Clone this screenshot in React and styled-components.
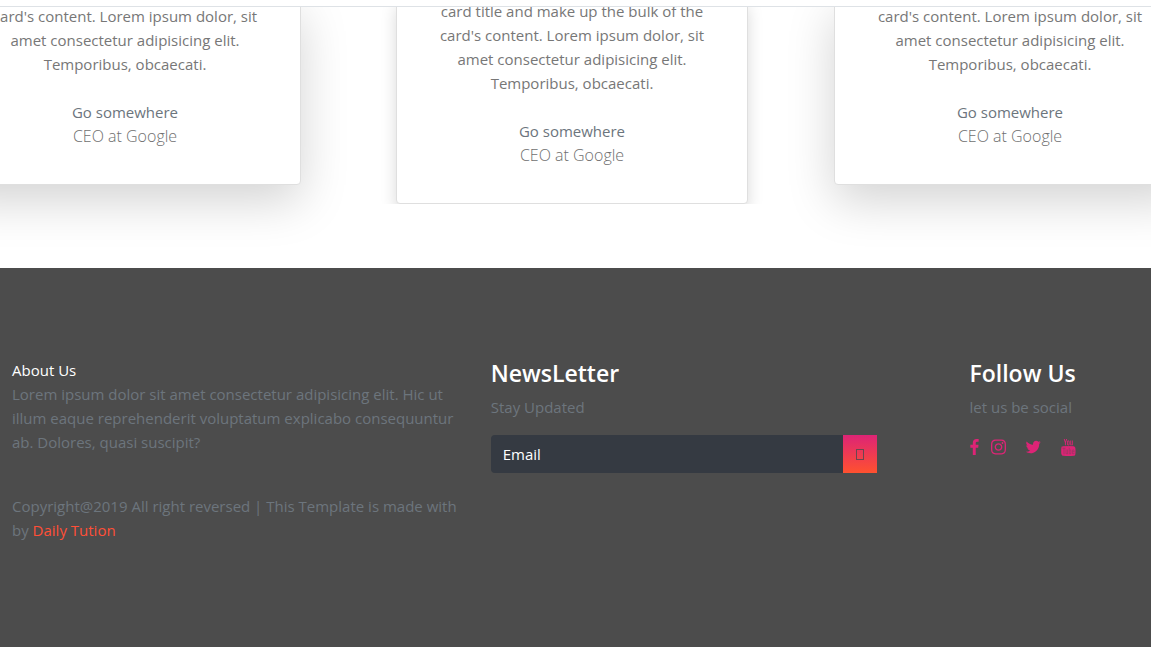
import React from "react";
import styled, { createGlobalStyle } from "styled-components";
import { TfiYoutube } from "react-icons/tfi";

const GlobalStyle = createGlobalStyle`
  *, *::before, *::after { box-sizing: border-box; }
  body {
    margin: 0;
    background: #fff;
    color: #212529;
    font-family: "Open Sans", "Noto Sans", sans-serif;
    font-size: 15px;
    line-height: 24px;
    overflow-x: hidden;
  }
  #root { min-height: 100vh; display: flex; flex-direction: column; }
  h4, h6, p { margin: 0; font-weight: 400; }
  a { text-decoration: none; }
`;

const TopBar = styled.header`
  position: relative;
  z-index: 2;
  height: 7px;
  background: #fff;
  border-bottom: 1px solid #dee2e6;
`;

const Stage = styled.main`
  display: flex;
  justify-content: center;
  height: 261px;
  padding: 0 16px 64px 0;
  overflow: hidden;
`;

const Slide = styled.div`
  display: flex;
  flex: none;
  ${(p) =>
    p.$active
      ? "overflow: hidden; padding: 0 16px; margin: 0 70px 0 79px;"
      : "margin-bottom: 19px;"}
`;

const Card = styled.article`
  display: flex;
  flex-direction: column;
  justify-content: flex-end;
  width: 352px;
  margin-top: -8px;
  padding: 0 40px 36px;
  text-align: center;
  color: #777;
  background: #fff;
  border: 1px solid #dfdfdf;
  border-radius: 4px;
  box-shadow: ${(p) =>
    p.$active
      ? "0 8px 16px rgba(0, 0, 0, 0.15)"
      : "0 16px 48px rgba(0, 0, 0, 0.175)"};
`;

const CardText = styled.p`
  margin-bottom: 24px;
  white-space: pre-line;
`;

const CardLink = styled.a`
  color: #6c757d;
`;

const Role = styled.p`
  font-size: 16px;
  font-weight: 300;
  color: #6f6f6f;
`;

const Footer = styled.footer`
  flex: 1;
  padding: 90px 2px 105px 0;
  background: #4c4c4c;
  color: #6c757d;
`;

const Columns = styled.div`
  display: grid;
  grid-template-columns: 5fr 5fr 2fr;
`;

const Column = styled.section`
  padding: 0 12px;
  min-width: 0;
`;

const SmallTitle = styled.h6`
  font-size: 15px;
  color: #fff;
`;

const Title = styled.h4`
  margin-bottom: 6px;
  font-size: 23px;
  line-height: 31px;
  font-weight: 600;
  color: #fff;
`;

const Text = styled.p`
  margin-bottom: ${(p) => p.$space || 0}px;
`;

const BrandLink = styled.a`
  color: #ff4f37;
`;

const Form = styled.form`
  display: flex;
  width: 85%;
  height: 38px;
`;

const EmailInput = styled.input`
  flex: 1;
  min-width: 0;
  padding: 0 12px;
  border: 0;
  border-radius: 4px 0 0 4px;
  background: #353a42;
  color: #fff;
  font: inherit;
  &::placeholder { color: #fff; opacity: 1; }
`;

const Submit = styled.button`
  display: flex;
  align-items: center;
  justify-content: center;
  width: 34px;
  padding: 0;
  border: 0;
  background: linear-gradient(#dd2476, #ff512f);
`;

const MissingGlyph = styled.span`
  width: 8px;
  height: 11px;
  border: 1px solid #6b4650;
`;

const Socials = styled.nav`
  display: flex;
  align-items: center;
  height: 24px;
  color: #dd2476;
`;

const SocialLink = styled.a`
  display: flex;
  color: inherit;
  margin-right: ${(p) => p.$space || 0}px;
`;

const lines = ["card's content. Lorem ipsum dolor, sit", "amet consectetur adipisicing elit.", "Temporibus, obcaecati."];

const slides = [
  { id: 1, active: false, text: lines.join("\n") },
  { id: 2, active: true, text: ["card title and make up the bulk of the", ...lines].join("\n") },
  { id: 3, active: false, text: lines.join("\n") },
];

const socials = [
  {
    name: "Facebook",
    space: 12,
    width: 9,
    box: "479 0 864 1664",
    path: "M1343 12v264h-157q-86 0-116 36t-30 108v189h293l-39 296h-254v759h-306v-759h-255v-296h255v-218q0-186 104-288.500t277-102.500q147 0 228 12z",
  },
  {
    name: "Instagram",
    space: 19,
    width: 15,
    box: "128 128 1536 1536",
    path: "M1152 896q0-106-75-181t-181-75-181 75-75 181 75 181 181 75 181-75 75-181zm138 0q0 164-115 279t-279 115-279-115-115-279 115-279 279-115 279 115 115 279zm108-410q0 38-27 65t-65 27-65-27-27-65 27-65 65-27 65 27 27 65zm-502-220q-7 0-76.500-.5t-105.500 0-96.500 3-103 10-71.500 18.500q-50 20-88 58t-58 88q-11 29-18.500 71.500t-10 103-3 96.500 0 105.500.5 76.500-.5 76.500 0 105.500 3 96.500 10 103 18.500 71.500q20 50 58 88t88 58q29 11 71.500 18.500t103 10 96.500 3 105.500 0 76.500-.5 76.500.5 105.500 0 96.500-3 103-10 71.500-18.500q50-20 88-58t58-88q11-29 18.500-71.500t10-103 3-96.500 0-105.500-.5-76.500.5-76.500 0-105.500-3-96.500-10-103-18.500-71.500q-20-50-58-88t-88-58q-29-11-71.500-18.500t-103-10-96.500-3-105.500 0-76.500.5zm768 630q0 229-5 317-10 208-124 322t-322 124q-88 5-317 5t-317-5q-208-10-322-124t-124-322q-5-88-5-317t5-317q10-208 124-322t322-124q88-5 317-5t317 5q208 10 322 124t124 322q5 88 5 317z",
  },
  {
    name: "Twitter",
    space: 19,
    width: 16,
    box: "44 128 1664 1536",
    path: "M1684 408q-67 98-162 167 1 14 1 42 0 130-38 259.500t-115.500 248.500-184.500 210.500-258 146-323 54.500q-271 0-496-145 35 4 78 4 225 0 401-138-105-2-188-64.500t-114-159.500q33 5 61 5 43 0 85-11-112-23-185.500-111.500t-73.500-205.500v-4q68 38 146 41-66-44-105-115t-39-154q0-88 44-163 121 149 294.500 238.500t371.500 99.500q-8-38-8-74 0-134 94.500-228.500t228.500-94.500q140 0 236 102 109-21 205-78-37 115-142 178 93-10 186-50z",
  },
];

export default function App() {
  return (
    <>
      <GlobalStyle />
      <TopBar />
      <Stage>
        {slides.map((s) => (
          <Slide key={s.id} $active={s.active}>
            <Card $active={s.active}>
              <CardText>{s.text}</CardText>
              <CardLink href="#">Go somewhere</CardLink>
              <Role>CEO at Google</Role>
            </Card>
          </Slide>
        ))}
      </Stage>
      <Footer>
        <Columns>
          <Column>
            <SmallTitle>About Us</SmallTitle>
            <Text $space={40}>
              Lorem ipsum dolor sit amet consectetur adipisicing elit. Hic ut illum eaque
              reprehenderit voluptatum explicabo consequuntur ab. Dolores, quasi suscipit?
            </Text>
            <Text>
              Copyright@2019 All right reversed | This Template is made with by{" "}
              <BrandLink href="#">Daily Tution</BrandLink>
            </Text>
          </Column>
          <Column>
            <Title>NewsLetter</Title>
            <Text $space={16}>Stay Updated</Text>
            <Form>
              <EmailInput type="email" placeholder="Email" aria-label="Email" />
              <Submit type="button" aria-label="Subscribe">
                <MissingGlyph />
              </Submit>
            </Form>
          </Column>
          <Column>
            <Title>Follow Us</Title>
            <Text $space={16}>let us be social</Text>
            <Socials aria-label="Social media">
              {socials.map((s) => (
                <SocialLink key={s.name} href="#" aria-label={s.name} $space={s.space}>
                  <svg width={s.width} height="16" viewBox={s.box} fill="currentColor">
                    <path d={s.path} />
                  </svg>
                </SocialLink>
              ))}
              <SocialLink href="#" aria-label="YouTube">
                <svg width="16" height="17" viewBox="0 0 16 17" fill="currentColor">
                  <rect x="1" y="7" width="14" height="9" rx="2" opacity="0.6" />
                  <TfiYoutube size={17} x="0" y="0" />
                </svg>
              </SocialLink>
            </Socials>
          </Column>
        </Columns>
      </Footer>
    </>
  );
}
